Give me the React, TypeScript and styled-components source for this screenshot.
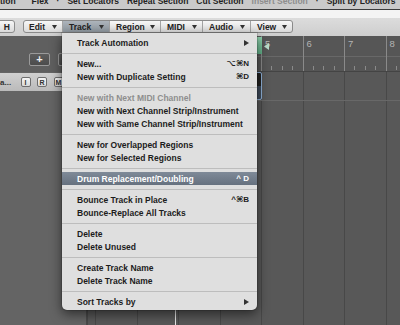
import React from "react";
import styled, { createGlobalStyle } from "styled-components";

const Global = createGlobalStyle`
  html, body { margin: 0; padding: 0; background: #585858; }
  body { font-family: "Liberation Sans", "DejaVu Sans", Arial, sans-serif; }
  * { box-sizing: border-box; }
`;

const Screen = styled.div`
  position: relative;
  width: 400px;
  height: 325px;
  overflow: hidden;
  display: flex;
  flex-direction: column;
  background: #585858;
`;

const TopStrip = styled.div`
  height: 10px;
  flex: 0 0 10px;
  background: #cacaca;
  border-bottom: 1px solid #3c3c3c;
  overflow: hidden;
  display: flex;
  align-items: flex-start;
  gap: 8px;
  white-space: nowrap;
`;

const TopItem = styled.span<{ $dim?: boolean }>`
  margin-top: -3px;
  font-size: 8.5px;
  line-height: 9px;
  font-weight: bold;
  color: ${(p) => (p.$dim ? "#8d8d8d" : "#232323")};
`;

const WhiteBand = styled.div`
  height: 8px;
  flex: 0 0 8px;
  background: #f4f4f4;
`;

const Toolbar = styled.div`
  height: 18px;
  flex: 0 0 18px;
  background: linear-gradient(#dcdcdc, #cecece);
  display: flex;
  align-items: flex-start;
  padding-top: 2px;
  gap: 8px;
`;

const PlainButton = styled.div`
  margin-left: -5px;
  width: 20px;
  height: 13px;
  border: 1px solid #8c8c8c;
  border-radius: 3px;
  background: linear-gradient(#f7f7f7, #dadada);
  display: flex;
  align-items: center;
  justify-content: flex-end;
  padding-right: 4px;
  font-size: 8.5px;
  font-weight: bold;
  color: #222;
`;

const Segmented = styled.div`
  display: flex;
  height: 13px;
  border: 1px solid #8a8a8a;
  border-radius: 3px;
  overflow: hidden;
  background: linear-gradient(#f7f7f7, #dadada);
`;

const Seg = styled.div<{ $w: number; $active?: boolean }>`
  width: ${(p) => p.$w}px;
  display: flex;
  align-items: center;
  justify-content: space-between;
  padding: 0 5px 0 6px;
  border-left: 1px solid #a3a3a3;
  &:first-child {
    border-left: none;
    padding-left: 5px;
  }
  background: ${(p) => (p.$active ? "linear-gradient(#adb4bb, #8e979f)" : "transparent")};
  font-size: 8.5px;
  font-weight: bold;
  color: #222;
  white-space: nowrap;
`;

const Workspace = styled.div`
  flex: 1;
  display: flex;
  min-height: 0;
`;

const TrackList = styled.div`
  width: 87px;
  flex: 0 0 87px;
  display: flex;
  flex-direction: column;
  background: #646464;
  border-right: 1px solid #4a4a4a;
`;

const ListHeader = styled.div`
  height: 36px;
  flex: 0 0 36px;
  background: #5f5f5f;
  display: flex;
  align-items: flex-end;
  gap: 8px;
  padding: 0 0 6px 29px;
`;

const DarkButton = styled.div`
  width: 21px;
  height: 13px;
  border: 1px solid #9a9a9a;
  border-radius: 2px;
  background: linear-gradient(#5c5c5c, #4c4c4c);
  color: #f0f0f0;
  font-size: 11px;
  line-height: 11px;
  font-weight: bold;
  display: flex;
  align-items: center;
  justify-content: center;
  flex: 0 0 auto;
`;

const TrackRow = styled.div`
  margin-top: 1px;
  height: 18px;
  background: linear-gradient(#d0d0d0, #bababa);
  display: flex;
  align-items: center;
  gap: 6.5px;
  white-space: nowrap;
`;

const TrackName = styled.span`
  width: 14px;
  font-size: 8px;
  font-weight: bold;
  color: #333;
  overflow: hidden;
`;

const TrackBtn = styled.div`
  width: 10px;
  height: 10px;
  flex: 0 0 10px;
  border: 1px solid #6e6e6e;
  border-radius: 2px;
  background: linear-gradient(#f4f4f4, #d8d8d8);
  font-size: 7px;
  font-weight: bold;
  color: #333;
  display: flex;
  align-items: center;
  justify-content: center;
`;

const Arrange = styled.div`
  position: relative;
  flex: 1;
  display: flex;
  flex-direction: column;
  background-color: #585858;
  background-image: repeating-linear-gradient(
    to right,
    #484848 0 1px,
    transparent 1px 41.5px
  );
  background-position: 8px 0;
`;

const Ruler = styled.div`
  position: relative;
  height: 36px;
  flex: 0 0 36px;
  display: flex;
  padding-left: 8px;
  background-color: #565656;
  background-image: linear-gradient(
    to bottom,
    transparent 20px,
    #686868 20px 21px,
    transparent 21px
  );
  border-bottom: 1px solid #444;
`;

const Bar = styled.div`
  flex: 0 0 41.5px;
  display: flex;
  flex-direction: column;
  justify-content: space-between;
  border-left: 1px solid #8a8a8a;
`;

const BarNum = styled.span`
  padding: 3px 0 0 3px;
  height: 13px;
  font-size: 9.5px;
  line-height: 10px;
  color: #b4b4b4;
`;

const Ticks = styled.div`
  display: flex;
  height: 4px;
  margin-bottom: 1px;
`;

const Quarter = styled.div`
  flex: 1;
  & + & {
    border-left: 1px solid #8a8a8a;
  }
`;

const Cycle = styled.div`
  position: absolute;
  left: 8px;
  top: 1px;
  width: 167px;
  height: 17px;
  background: linear-gradient(#8fd0ad, #5fae86);
`;

const CycleEnd = styled.svg`
  position: absolute;
  right: -7px;
  top: 6px;
`;

const Lane = styled.div`
  height: 29px;
  flex: 0 0 29px;
  border-bottom: 1px solid #686868;
  display: flex;
  align-items: flex-start;
  padding-left: 8px;
`;

const Region = styled.div`
  width: 167px;
  height: 28px;
  border: 1px solid #8fb1d8;
  border-radius: 2px;
  background: linear-gradient(#202020 0 50%, #3e4a5a 50%);
`;

const Playhead = styled.div`
  position: absolute;
  left: 88px;
  top: 0;
  bottom: 0;
  width: 1px;
  background: #e6e6e6;
`;

const Menu = styled.div`
  position: absolute;
  left: 62px;
  top: 33px;
  width: 195px;
  height: 277px;
  background: #dfdfdf;
  border-radius: 0 0 5px 5px;
  box-shadow: 0 4px 12px rgba(0, 0, 0, 0.55), 0 0 0 1px rgba(0, 0, 0, 0.12);
  display: flex;
  flex-direction: column;
  padding: 3px 0 2px;
`;

const Item = styled.div<{ $disabled?: boolean; $active?: boolean }>`
  height: 13px;
  flex: 0 0 13px;
  display: flex;
  align-items: center;
  justify-content: space-between;
  padding: 0 8px 0 15px;
  font-size: 8.5px;
  font-weight: bold;
  white-space: nowrap;
  color: ${(p) => (p.$active ? "#ffffff" : p.$disabled ? "#8e8e8e" : "#1c1c1c")};
  background: ${(p) => (p.$active ? "linear-gradient(#7f8a98, #66717f)" : "transparent")};
`;

const Shortcut = styled.span`
  font-family: "Liberation Sans", "DejaVu Sans", sans-serif;
  font-size: 8px;
  font-weight: bold;
`;

const Sep = styled.div`
  height: 8px;
  flex: 0 0 8px;
  display: flex;
  align-items: center;
  &::after {
    content: "";
    flex: 1;
    height: 1px;
    background: #bdbdbd;
  }
`;

const Arrow = () => (
  <svg width="5" height="4" viewBox="0 0 5 4">
    <path d="M0 0 L5 0 L2.5 4 Z" fill="#333" />
  </svg>
);

const SubArrow = () => (
  <svg width="5" height="6" viewBox="0 0 5 6">
    <path d="M0 0 L5 3 L0 6 Z" fill="#333" />
  </svg>
);

type Entry =
  | { sep: true }
  | { label: string; key?: string; sub?: boolean; disabled?: boolean; active?: boolean };

const entries: Entry[] = [
  { label: "Track Automation", sub: true },
  { sep: true },
  { label: "New...", key: "⌥⌘N" },
  { label: "New with Duplicate Setting", key: "⌘D" },
  { sep: true },
  { label: "New with Next MIDI Channel", disabled: true },
  { label: "New with Next Channel Strip/Instrument" },
  { label: "New with Same Channel Strip/Instrument" },
  { sep: true },
  { label: "New for Overlapped Regions" },
  { label: "New for Selected Regions" },
  { sep: true },
  { label: "Drum Replacement/Doubling", key: "^ D", active: true },
  { sep: true },
  { label: "Bounce Track in Place", key: "^⌘B" },
  { label: "Bounce-Replace All Tracks" },
  { sep: true },
  { label: "Delete" },
  { label: "Delete Unused" },
  { sep: true },
  { label: "Create Track Name" },
  { label: "Delete Track Name" },
  { sep: true },
  { label: "Sort Tracks by", sub: true },
];

const segs = [
  { label: "Edit", w: 38 },
  { label: "Track", w: 47, active: true },
  { label: "Region", w: 51 },
  { label: "MIDI", w: 42 },
  { label: "Audio", w: 48 },
  { label: "View", w: 42 },
];

export default function App() {
  return (
    <>
      <Global />
      <Screen>
        <TopStrip>
          <TopItem>tion</TopItem>
          <TopItem style={{ marginLeft: 8 }}>Flex</TopItem>
          <TopItem>·</TopItem>
          <TopItem>Set Locators</TopItem>
          <TopItem>Repeat Section</TopItem>
          <TopItem>Cut Section</TopItem>
          <TopItem $dim>Insert Section</TopItem>
          <TopItem>·</TopItem>
          <TopItem>Split by Locators</TopItem>
          <TopItem>·</TopItem>
        </TopStrip>
        <WhiteBand />
        <Toolbar>
          <PlainButton>H</PlainButton>
          <Segmented>
            {segs.map((s) => (
              <Seg key={s.label} $w={s.w} $active={s.active}>
                <span>{s.label}</span>
                <Arrow />
              </Seg>
            ))}
          </Segmented>
        </Toolbar>
        <Workspace>
          <TrackList>
            <ListHeader>
              <DarkButton>+</DarkButton>
              <DarkButton />
            </ListHeader>
            <TrackRow>
              <TrackName>a...</TrackName>
              <TrackBtn>I</TrackBtn>
              <TrackBtn>R</TrackBtn>
              <TrackBtn>M</TrackBtn>
            </TrackRow>
          </TrackList>
          <Arrange>
            <Ruler>
              {[1, 2, 3, 4, 5, 6, 7, 8].map((n) => (
                <Bar key={n}>
                  <BarNum>{n >= 5 ? n : ""}</BarNum>
                  <Ticks>
                    <Quarter />
                    <Quarter />
                    <Quarter />
                    <Quarter />
                  </Ticks>
                </Bar>
              ))}
              <Cycle>
                <CycleEnd width="5" height="7" viewBox="0 0 5 7">
                  <path d="M5 0 L0 3.5 L5 7 Z" fill="#b9dccb" />
                </CycleEnd>
              </Cycle>
            </Ruler>
            <Lane>
              <Region />
            </Lane>
            <Playhead />
          </Arrange>
        </Workspace>
        <Menu>
          {entries.map((e, i) =>
            "sep" in e ? (
              <Sep key={i} />
            ) : (
              <Item key={i} $disabled={e.disabled} $active={e.active}>
                <span>{e.label}</span>
                {e.key ? <Shortcut>{e.key}</Shortcut> : e.sub ? <SubArrow /> : null}
              </Item>
            )
          )}
        </Menu>
      </Screen>
    </>
  );
}
